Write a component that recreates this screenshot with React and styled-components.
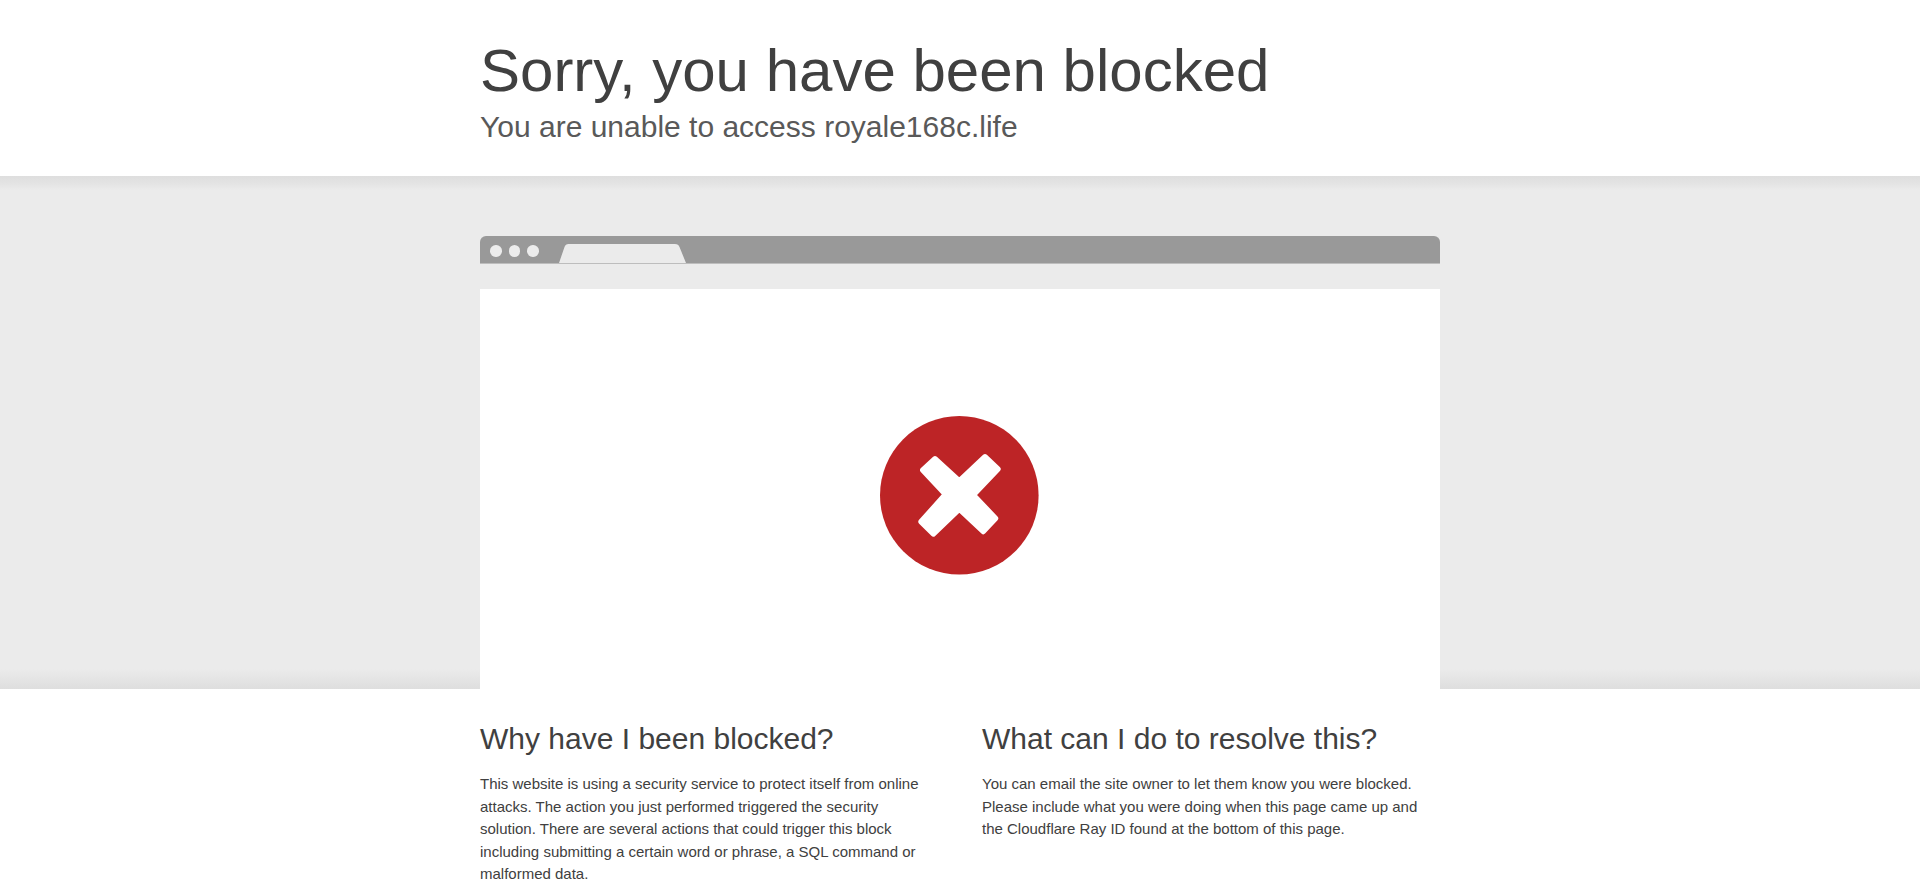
import React from 'react'
import styled, { createGlobalStyle } from 'styled-components'

const GlobalStyle = createGlobalStyle`
  html, body {
    margin: 0;
    padding: 0;
    background: #fff;
    font-family: "Liberation Sans", Arial, sans-serif;
    color: #404040;
  }
`

const Wrap = styled.div`
  width: 960px;
  margin: 0 auto;
`

const Header = styled.header`
  height: 176px;
  padding-top: 33px;
  box-sizing: border-box;
`

const Title = styled.h1`
  margin: 0;
  font-size: 60px;
  line-height: 75px;
  font-weight: 400;
  color: #404040;
`

const Subtitle = styled.h2`
  margin: 0;
  font-size: 30px;
  line-height: 37px;
  font-weight: 400;
  color: #595959;
`

const Band = styled.section`
  height: 513px;
  padding-top: 60px;
  box-sizing: border-box;
  background:
    linear-gradient(#dedede, #e4e4e4 8px, #ebebeb 14px, #ebebeb calc(100% - 20px), #dedede);
`

const BrowserBar = styled.div`
  height: 27px;
  display: flex;
  align-items: flex-end;
  background: #999;
  border-radius: 6px 6px 0 0;
  border-bottom: 1px solid #bdbdbd;
  padding-left: 10px;
`

const Dots = styled.div`
  display: flex;
  gap: 7px;
  align-self: center;
  margin-top: 3px;
`

const Dot = styled.span`
  width: 11.5px;
  height: 11.5px;
  border-radius: 50%;
  background: #ececec;
`

const Tab = styled.svg`
  display: block;
  margin-left: 20px;
  width: 129px;
  height: 19px;
`

const Strip = styled.div`
  height: 25px;
  background: #ebebeb;
`

const Viewport = styled.div`
  height: 400px;
  background: #fff;
  display: flex;
  align-items: center;
  justify-content: center;
`

const BlockedIcon = styled.svg`
  display: block;
  width: 160px;
  height: 160px;
  margin-top: 12px;
`

const Columns = styled.div`
  display: grid;
  grid-template-columns: 440px 458px;
  column-gap: 62px;
  padding-top: 31px;
`

const Heading = styled.h2`
  margin: 0 0 16px;
  font-size: 30px;
  line-height: 37px;
  font-weight: 400;
  color: #404040;
`

const Copy = styled.p`
  margin: 0;
  font-size: 15px;
  line-height: 22.5px;
  color: #404040;
`

export default function App() {
  return (
    <>
      <GlobalStyle />
      <Header>
        <Wrap>
          <Title>Sorry, you have been blocked</Title>
          <Subtitle>You are unable to access royale168c.life</Subtitle>
        </Wrap>
      </Header>
      <Band>
        <Wrap>
          <BrowserBar>
            <Dots>
              <Dot />
              <Dot />
              <Dot />
            </Dots>
            <Tab viewBox="0 0 129 19">
              <path
                d="M0 19 L5.5 3 Q6.5 0 9.5 0 L116 0 Q119.5 0 120.5 3 L127 19 Z"
                fill="#ebebeb"
              />
            </Tab>
          </BrowserBar>
          <Strip />
          <Viewport>
            <BlockedIcon viewBox="0 0 160 160">
              <circle cx="79.3" cy="80.3" r="79.3" fill="#bd2426" />
              <path
                d="M42.8 55 L55 43.8 L79.3 66.1 L105 41.8 L117.9 54 L93.2 80 L115.5 103.3 L103.3 116.5 L79.3 93.9 L53.3 118.9 L41.1 106.7 L65.5 79.3 Z"
                fill="#fff"
                stroke="#fff"
                strokeWidth="5.5"
                strokeLinejoin="round"
              />
            </BlockedIcon>
          </Viewport>
        </Wrap>
      </Band>
      <Wrap>
        <Columns>
          <div>
            <Heading>Why have I been blocked?</Heading>
            <Copy>
              This website is using a security service to protect itself from online attacks. The
              action you just performed triggered the security solution. There are several actions
              that could trigger this block including submitting a certain word or phrase, a SQL
              command or malformed data.
            </Copy>
          </div>
          <div>
            <Heading>What can I do to resolve this?</Heading>
            <Copy>
              You can email the site owner to let them know you were blocked. Please include what
              you were doing when this page came up and the Cloudflare Ray ID found at the bottom
              of this page.
            </Copy>
          </div>
        </Columns>
      </Wrap>
    </>
  )
}
